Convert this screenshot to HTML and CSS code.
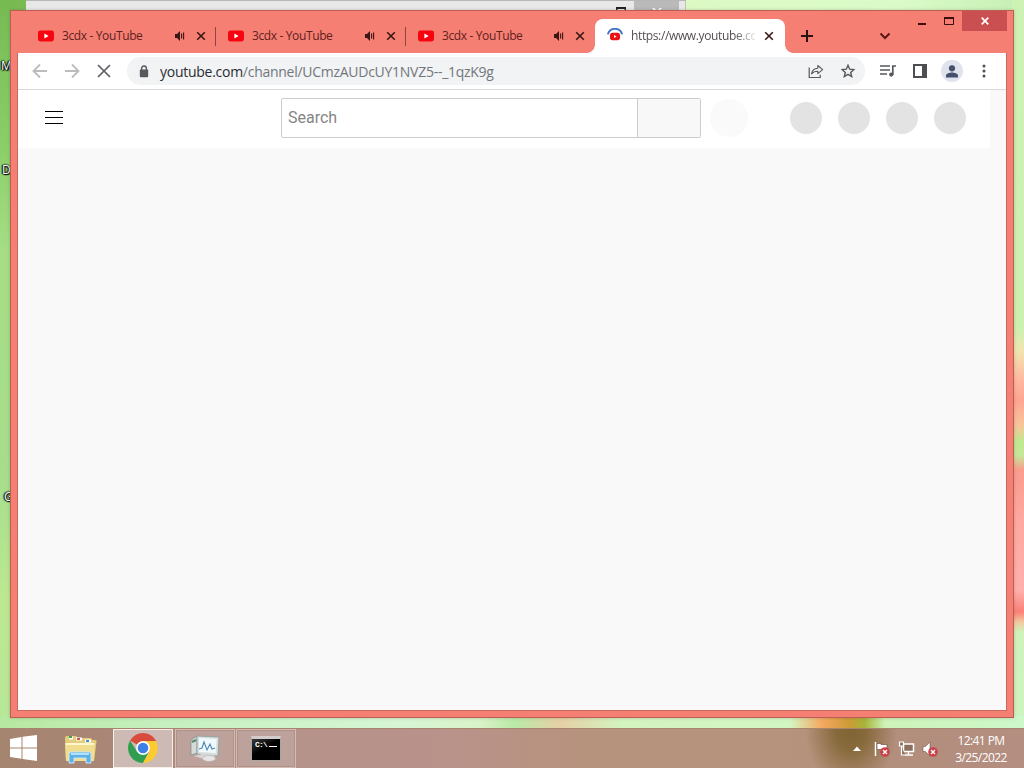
FILE: index.html
```html
<!DOCTYPE html>
<html lang="en">
<head>
    <meta charset="UTF-8">
    <meta name="viewport" content="width=device-width, initial-scale=1.0">
    <title>Desktop</title>
    <link rel="stylesheet" href="styles.css">
</head>
<body>
<svg width="0" height="0" class="defs">
    <symbol id="yt" viewBox="0 0 16 12">
        <rect width="16" height="11" y=".5" rx="2.4" fill="#f60410"/>
        <path d="M6.4 3.6v4.8L10.6 6z" fill="#fff"/>
    </symbol>
    <symbol id="speaker" viewBox="0 0 12 12">
        <path d="M1 4h2l3-3v10L3 8H1z" fill="#3a1714"/>
        <path d="M7.6 3.6v4.8M9.6 2.5v7" stroke="#3a1714" stroke-width="1.1" fill="none"/>
    </symbol>
    <symbol id="cross" viewBox="0 0 10 10">
        <path d="M1.2 1.2l7.6 7.6M8.8 1.2L1.2 8.8" stroke="currentColor" stroke-width="1.6" fill="none"/>
    </symbol>
    <symbol id="badge" viewBox="0 0 10 10">
        <circle cx="5" cy="5" r="4.8" fill="#c9424a"/>
        <path d="M3 3l4 4M7 3L3 7" stroke="#fff" stroke-width="1.3"/>
    </symbol>
</svg>
<div class="desktop">
    <div class="back-window">
        <svg class="back-max" width="10" height="4"><path d="M.5 4V1h9v3" fill="none" stroke="#222" stroke-width="2"/></svg>
        <div class="back-close"><svg width="10" height="4"><path d="M1 0l4 4 4-4" fill="none" stroke="#fff" stroke-width="1.6"/></svg></div>
    </div>
    <span class="icon-label label-m">M</span>
    <span class="icon-label label-d">D</span>
    <span class="icon-label label-g">G</span>

    <div class="window">
        <div class="titlebar">
            <div class="tabs">
                <div class="tab">
                    <svg class="favicon" width="16" height="12"><use href="#yt"/></svg>
                    <span class="tab-title">3cdx - YouTube</span>
                    <svg class="sound" width="12" height="12"><use href="#speaker"/></svg>
                    <svg class="close" width="10" height="10"><use href="#cross"/></svg>
                </div>
                <div class="tab">
                    <svg class="favicon" width="16" height="12"><use href="#yt"/></svg>
                    <span class="tab-title">3cdx - YouTube</span>
                    <svg class="sound" width="12" height="12"><use href="#speaker"/></svg>
                    <svg class="close" width="10" height="10"><use href="#cross"/></svg>
                </div>
                <div class="tab last">
                    <svg class="favicon" width="16" height="12"><use href="#yt"/></svg>
                    <span class="tab-title">3cdx - YouTube</span>
                    <svg class="sound" width="12" height="12"><use href="#speaker"/></svg>
                    <svg class="close" width="10" height="10"><use href="#cross"/></svg>
                </div>
                <div class="tab active">
                    <svg class="favicon" width="16" height="16" viewBox="0 0 16 16">
                        <path d="M.9 6.4A7.3 7.3 0 0 1 15.1 6.4" fill="none" stroke="#3e74c9" stroke-width="1.9"/>
                        <rect x="3" y="4.8" width="10" height="7.4" rx="2.6" fill="#ee1111"/>
                        <path d="M7 7v3l2.6-1.5z" fill="#fff"/>
                    </svg>
                    <span class="tab-title">https://www.youtube.co</span>
                    <svg class="close" width="10" height="10"><use href="#cross"/></svg>
                </div>
                <svg class="new-tab" width="12" height="12"><path d="M6 0v12M0 6h12" stroke="#2a1010" stroke-width="2"/></svg>
            </div>
            <svg class="tab-search" width="12" height="8"><path d="M1.5 1.5L6 6l4.5-4.5" fill="none" stroke="#5a1712" stroke-width="2"/></svg>
            <div class="controls">
                <svg class="min" width="8" height="2"><rect width="8" height="2" fill="#3c0d0a"/></svg>
                <svg class="max" width="10" height="8"><path d="M.5 0v7.5h9V0" fill="none" stroke="#3c0d0a"/><rect width="10" height="2" fill="#3c0d0a"/></svg>
                <div class="win-close"><svg width="8" height="8"><path d="M.7.7l6.6 6.6M7.3.7L.7 7.3" stroke="#fff" stroke-width="1.7"/></svg></div>
            </div>
        </div>
        <div class="client">
            <div class="toolbar">
                <svg class="back" width="16" height="16" viewBox="0 0 16 16"><path d="M15 8H2M8 1.5L1.5 8 8 14.5" fill="none" stroke="#bcbcbe" stroke-width="1.8"/></svg>
                <svg class="forward" width="16" height="16" viewBox="0 0 16 16"><path d="M1 8h13M8 1.5L14.5 8 8 14.5" fill="none" stroke="#bcbcbe" stroke-width="1.8"/></svg>
                <svg class="stop" width="14" height="14"><path d="M1 1l12 12M13 1L1 13" stroke="#5c5e62" stroke-width="1.7"/></svg>
                <div class="omnibox">
                    <svg class="lock" width="10" height="13"><rect x=".8" y="4.6" width="8.4" height="7.6" rx="1" fill="#55585c"/><path d="M2.6 5V3.4a2.4 2.4 0 0 1 4.8 0V5" fill="none" stroke="#55585c" stroke-width="1.4"/></svg>
                    <span class="url"><b>youtube.com</b>/channel/UCmzAUDcUY1NVZ5--_1qzK9g</span>
                    <svg class="share" width="16" height="15" viewBox="0 0 16 15"><path d="M1.2 3.5v10h11v-2.7" fill="none" stroke="#55585c" stroke-width="1.2"/><path d="M3.6 9.8C4 6.3 6.4 4.4 9.8 4.2V1.5l4.8 4.2-4.8 4V7.2C7 7.2 5 8 3.6 9.8z" fill="none" stroke="#55585c" stroke-width="1.1" stroke-linejoin="round"/></svg>
                    <svg class="star" width="14" height="14" viewBox="0 0 14 14"><path d="M7 1.3l1.7 3.9 4.2.4-3.2 2.8 1 4.1L7 10.3l-3.7 2.2 1-4.1L1.1 5.6l4.2-.4z" fill="none" stroke="#55585c" stroke-width="1.4"/></svg>
                </div>
                <div class="actions">
                    <svg width="16" height="14" viewBox="0 0 16 14"><path d="M0 2h10M0 6h10M0 10h7" stroke="#55585c" stroke-width="1.6"/><path d="M12.8 11V2H16" fill="none" stroke="#55585c" stroke-width="1.7"/><circle cx="11.2" cy="10.6" r="2.1" fill="#55585c"/></svg>
                    <svg width="14" height="14"><rect width="14" height="14" fill="#4c4e52"/><rect x="2" y="2" width="7" height="10" fill="#fff"/></svg>
                    <div class="avatar"><svg width="14" height="13"><circle cx="7" cy="3.3" r="3.1" fill="#46506a"/><path d="M1 12.5v-2c0-2 3.5-3 6-3s6 1 6 3v2z" fill="#46506a"/></svg></div>
                    <svg class="dots" width="4" height="14"><g fill="#4c4e52"><circle cx="2" cy="2" r="1.5"/><circle cx="2" cy="7" r="1.5"/><circle cx="2" cy="12" r="1.5"/></g></svg>
                </div>
            </div>
            <div class="page">
                <div class="masthead">
                    <svg class="menu" width="18" height="13"><path d="M0 .5h18M0 6.5h18M0 12.5h18" stroke="#000"/></svg>
                    <div class="search">
                        <div class="search-input">Search</div>
                        <div class="search-button"></div>
                    </div>
                    <div class="mic"></div>
                    <div class="skeletons"><i></i><i></i><i></i><i></i></div>
                </div>
            </div>
        </div>
    </div>

    <div class="taskbar">
        <div class="start">
            <svg width="27" height="26" viewBox="0 0 27 26"><path d="M0 4l11.5-2v10.5H0zM12.5 1.8L27 0v12.5H12.5zM0 13.5h11.5v10.3L0 22zM12.5 13.5H27V26l-14.5-2z" fill="#fff"/></svg>
        </div>
        <div class="explorer">
            <svg width="34" height="30" viewBox="0 0 34 30">
                <path d="M1 3q0-2 2-2h9l2 2h12q2 0 2 2h3q2 0 1.5 2L30 26H2z" fill="#e3cd7c"/>
                <path d="M5 3h4M12 4h6M21 6h6" stroke="#fff" stroke-width="3"/>
                <path d="M5 2h3" stroke="#4b9d52" stroke-width="2"/><path d="M13 4h3" stroke="#d0574a" stroke-width="2"/><path d="M22 6h3" stroke="#4a8bc8" stroke-width="2"/>
                <path d="M1 8h30l-1 18H2z" fill="#f0de8e"/>
                <path d="M2 9h28" stroke="#fff7cf" stroke-width="2"/>
                <path d="M5 28V19q0-2 2-2h18q2 0 2 2v9h-5v-5H10v5z" fill="#5fb0e6" stroke="#c5e8fa"/>
                <path d="M7 19h18" stroke="#b5e0f8" stroke-width="2"/>
            </svg>
        </div>
        <div class="task current">
            <svg width="30" height="30" viewBox="0 0 30 30">
                <path d="M15 15L2.01 7.5A15 15 0 0 1 27.99 7.5L28 8H15z" fill="#d94b3d"/>
                <path d="M15 15l6.1 3.5L15 30A15 15 0 0 1 2.01 7.5l6.9 11z" fill="#2f9e50"/>
                <path d="M15 8h13A15 15 0 0 1 15 30l6.5-11.5z" fill="#fbcb2f"/>
                <circle cx="15" cy="15" r="6.9" fill="#fff"/><circle cx="15" cy="15" r="5.3" fill="#3f7fe8"/>
            </svg>
        </div>
        <div class="task">
            <svg width="30" height="28" viewBox="0 0 30 28">
                <path d="M1 6l6-4v17l-6 2z" fill="#d5dadb" stroke="#7d8b8b" stroke-width=".7"/><path d="M2 8l4-2" stroke="#56886b" stroke-width="2"/>
                <path d="M7 2l22 1-1 19-21-2z" fill="#d7e0dc" stroke="#8b9a98" stroke-width=".8"/>
                <path d="M9 4l17.5 1-.8 14L9 18z" fill="#f0f9fd"/>
                <path d="M9 15l3-1 2-6 3 8 3-6 2 5 3-1" fill="none" stroke="#4c87b3" stroke-width="1.1"/>
                <path d="M4 22l12-3 10 3-9 4z" fill="#d7d4d4"/><ellipse cx="19" cy="24.5" rx="6.5" ry="3" fill="#e8e4e6" stroke="#aaa" stroke-width=".5"/>
            </svg>
        </div>
        <div class="task">
            <div class="console">C:\<u></u></div>
        </div>
        <div class="tray">
            <svg class="arrow" width="8" height="5"><path d="M0 5l4-4.5L8 5z" fill="#fff"/></svg>
            <svg class="flag" width="16" height="16" viewBox="0 0 16 16"><path d="M1.5 1v14" stroke="#fff" stroke-width="1.5"/><path d="M3 2.5h4v1h6v6H8v-1H3z" fill="#fff" stroke="#60463d" stroke-width=".6"/><use href="#badge" x="6" y="6" width="10" height="10"/></svg>
            <svg class="network" width="17" height="16" viewBox="0 0 17 16"><rect x="5.5" y="3" width="10" height="7.5" fill="#8a6f5c" stroke="#fff" stroke-width="1.5"/><path d="M10.5 11v2M7 14h8" stroke="#fff" stroke-width="1.5"/><path d="M1.5 1h4v4h-4zM3.5 5v9H7" fill="#8a6f5c" stroke="#fff" stroke-width="1.2"/></svg>
            <svg class="volume" width="16" height="16" viewBox="0 0 16 16"><path d="M1 5.5h2.5L8 1v14l-4.5-4.5H1z" fill="#fff" stroke="#60463d" stroke-width=".5"/><use href="#badge" x="6" y="6" width="10" height="10"/></svg>
            <div class="clock"><span class="time">12:41 PM</span><span class="date">3/25/2022</span></div>
        </div>
    </div>
</div>
</body>
</html>
```

FILE: styles.css
```css
*{
    margin: 0;
    padding: 0;
    box-sizing: border-box;
}
svg{
    display: block;
    flex: none;
}
.defs{
    position: absolute;
}
.desktop{
    position: relative;
    width: 1024px;
    height: 768px;
    overflow: hidden;
    font-family: "Open Sans", "Noto Sans", sans-serif;
    background:
        linear-gradient(to bottom, #cdf2b4 0, #cdf0b0 330px, #f0e5b0 350px, #ffb8a0 380px, #ffa592 400px, #f8c59a 425px, #bfe890 442px, #c4e89a 455px, #fb9c8e 470px, #ffaaa2 530px, #ffb0ac 590px, #fb8078 612px, #f3c9a0 622px, #cff2bb 632px, #cdf5c4 768px) 1012px 0 / 12px 716px no-repeat,
        linear-gradient(to right, #b7e8a0 0, #c6f0c0 170px, #d6f6d4 400px, #d9f2c8 480px, #b9eaa6 515px, #e6cfa6 560px, #d3f3bf 620px, #d2f6c2 790px, #f5a860 822px, #cb9b35 850px, #a6b53a 865px, #cdf3b8 885px, #cdf8cb 1024px) 0 716px / 1024px 12px no-repeat,
        linear-gradient(to bottom, #76ba52 0, #8bcf6a 150px, #a5de85 250px, #a6de8c 480px, #bde891 600px, #b5e69b 768px) 0 0 / 12px 768px no-repeat,
        linear-gradient(to right, #7aba53 0, #7aba53 26px, #dcf9c4 686px, #dafbc8 900px, #c6efb4 1024px);
}

/* window behind */
.back-window{
    position: absolute;
    left: 26px;
    top: 0;
    width: 660px;
    height: 12px;
    background-color: #e9e8e9;
    border-top: 1px solid #b5b8b4;
    border-right: 1px solid #c0c4bc;
    display: flex;
    justify-content: flex-end;
    align-items: flex-start;
    padding-right: 6px;
}
.back-max{
    margin-top: 6px;
    margin-right: 8px;
}
.back-close{
    width: 45px;
    height: 11px;
    background-color: #bababa;
    padding: 7px 0 0 18px;
}
.icon-label{
    position: absolute;
    color: #fff;
    font-size: 12px;
    line-height: 14px;
    text-shadow: 0 0 2px #000, 0 0 2px #000, 1px 1px 1px #000, -1px 0 1px #000;
}
.label-m{
    left: 1px;
    top: 59px;
}
.label-d{
    left: 2px;
    top: 163px;
}
.label-g{
    left: 4px;
    top: 490px;
}

/* browser */
.window{
    position: absolute;
    left: 10px;
    top: 10px;
    width: 1004px;
    height: 708px;
    background-color: #f67f74;
    border: 1px solid #b95f56;
    display: flex;
    flex-direction: column;
    box-shadow: 0 0 3px rgba(80, 60, 40, 0.25);
}
.titlebar{
    height: 42px;
    display: flex;
    align-items: flex-start;
    padding-left: 15px;
}
.tabs{
    display: flex;
    align-items: center;
    margin-top: 8px;
    height: 34px;
}
.tab{
    width: 190px;
    height: 34px;
    display: flex;
    align-items: center;
    padding: 0 10px 0 12px;
    color: #5e211c;
    font-size: 12px;
    background: linear-gradient(#8d4640, #8d4640) right 8px / 1px 19px no-repeat;
}
.tab.last{
    background: none;
    width: 189px;
}
.tab .close{
    color: #3a1714;
}
.tab-title{
    flex: 1;
    margin: -1px 0 0 8px;
    white-space: nowrap;
    letter-spacing: -0.37px;
}
.sound{
    margin-right: 10px;
}
.tab.active{
    position: relative;
    background: #fff;
    border-radius: 8px 8px 0 0;
    color: #55504f;
    padding-right: 11px;
}
.active::before, .active::after{
    content: "";
    position: absolute;
    bottom: 0;
    width: 8px;
    height: 8px;
}
.active::before{
    left: -8px;
    background: radial-gradient(circle at 0 0, transparent 7.5px, #fff 8px);
}
.active::after{
    right: -8px;
    background: radial-gradient(circle at 100% 0, transparent 7.5px, #fff 8px);
}
.active .tab-title{
    min-width: 0;
    margin-right: 9px;
    letter-spacing: -0.37px;
    -webkit-mask-image: linear-gradient(to right, #000 104px, transparent 127px);
    mask-image: linear-gradient(to right, #000 104px, transparent 127px);
}
.new-tab{
    margin-left: 16px;
}
.tab-search{
    margin: 21px 0 0 66px;
}
.controls{
    margin-left: auto;
    margin-right: 6px;
    display: flex;
    align-items: flex-start;
}
.min{
    margin: 12px 18px 0 0;
}
.max{
    margin: 6px 8px 0 0;
}
.win-close{
    width: 45px;
    height: 20px;
    background-color: #c94f51;
    display: flex;
    justify-content: center;
    align-items: center;
}
.client{
    flex: 1;
    margin: 0 7px 7px;
    display: flex;
    flex-direction: column;
    background-color: #f9f9f9;
    box-shadow: 0 0 0 1px #c86a60;
    clip-path: inset(0 -1px -1px -1px);
}
.toolbar{
    height: 37px;
    background-color: #fff;
    border-bottom: 1px solid #d9dadb;
    display: flex;
    align-items: center;
    padding-left: 14px;
}
.forward{
    margin-left: 16px;
}
.stop{
    margin-left: 17px;
}
.omnibox{
    width: 738px;
    height: 28px;
    margin-left: 16px;
    border-radius: 14px;
    background-color: #f1f3f4;
    display: flex;
    align-items: center;
    padding: 0 10px 0 12px;
}
.url{
    flex: 1;
    margin-left: 11px;
    font-size: 14px;
    letter-spacing: -0.27px;
    color: #72777c;
    white-space: nowrap;
}
.url b{
    font-weight: normal;
    color: #2b2d30;
}
.share{
    margin-right: 17px;
}
.actions{
    display: flex;
    align-items: center;
    margin-left: 15px;
}
.avatar{
    width: 22px;
    height: 22px;
    border-radius: 50%;
    background-color: #dfe3ee;
    display: flex;
    justify-content: center;
    align-items: center;
    margin-left: 14px;
}
.actions svg + svg{
    margin-left: 17px;
}
.actions .dots{
    margin-left: 19px;
}
.page{
    flex: 1;
}
.masthead{
    width: 972px;
    height: 58px;
    background-color: #fff;
    display: flex;
    align-items: center;
    padding-left: 27px;
}
.menu{
    margin-bottom: 3px;
}
.search{
    width: 420px;
    height: 40px;
    margin: -2px 0 0 218px;
    border: 1px solid #ccc;
    border-radius: 2px;
    display: flex;
}
.search-input{
    flex: 1;
    padding-left: 6px;
    font-family: Roboto, sans-serif;
    font-size: 16px;
    line-height: 38px;
    color: #858585;
}
.search-button{
    width: 63px;
    background-color: #f8f8f8;
    border-left: 1px solid #ccc;
}
.mic{
    width: 38px;
    height: 38px;
    margin: -2px 0 0 9px;
    border-radius: 50%;
    background-color: #fafafa;
}
.skeletons{
    display: flex;
    gap: 16px;
    margin: -2px 0 0 42px;
}
.skeletons i{
    width: 32px;
    height: 32px;
    border-radius: 50%;
    background-color: #e3e3e3;
}

/* taskbar */
.taskbar{
    position: absolute;
    left: 0;
    bottom: 0;
    width: 1024px;
    height: 40px;
    border-top: 1px solid #a78370;
    background:
        radial-gradient(ellipse 46px 60px at 851px 0, #806432 0, rgba(128, 100, 50, 0.85) 35%, rgba(128, 100, 50, 0) 100%),
        linear-gradient(to right, #a58470 0, #a98676 110px, #b5928a 300px, #b9928a 450px, #b6937c 600px, #b6937c 790px, #b28e7c 890px, #b48e80 1024px);
    display: flex;
}
.start{
    width: 48px;
    padding: 6px 0 0 10px;
}
.explorer{
    width: 65px;
    padding: 6px 0 0 16px;
}
.task{
    width: 60px;
    height: 39px;
    margin-right: 1px;
    background-color: #bda29c;
    border: 1px solid #d6bcb3;
    box-shadow: inset 0 0 0 1px #b0928a;
    display: flex;
    justify-content: center;
    align-items: center;
    padding-bottom: 1px;
}
.current{
    background-color: #cdbab5;
    border-color: #f6efe8;
    box-shadow: none;
    margin-right: 2px;
}
.console{
    width: 30px;
    height: 25px;
    background: linear-gradient(150deg, #3b3b3b, #000 45%);
    border: 1px solid #aaa6a4;
    border-top: 3px solid #d2cdca;
    color: #fff;
    font-family: "Liberation Mono", monospace;
    font-size: 8px;
    font-weight: bold;
    line-height: 9px;
    letter-spacing: -0.8px;
    padding: 1px 0 0 3px;
}
.console u{
    display: inline-block;
    width: 8px;
    height: 1px;
    margin-left: 2px;
    background-color: #fff;
}
.tray{
    margin-left: auto;
    display: flex;
    align-items: center;
    padding-right: 16px;
}
.flag{
    margin-left: 13px;
}
.network{
    margin-left: 8px;
}
.volume{
    margin-left: 7px;
}
.clock{
    width: 54px;
    margin-left: 16px;
    display: flex;
    flex-direction: column;
    align-items: center;
    color: #fff;
    font-size: 12px;
    line-height: 17px;
    letter-spacing: -0.6px;
    white-space: nowrap;
}
```
